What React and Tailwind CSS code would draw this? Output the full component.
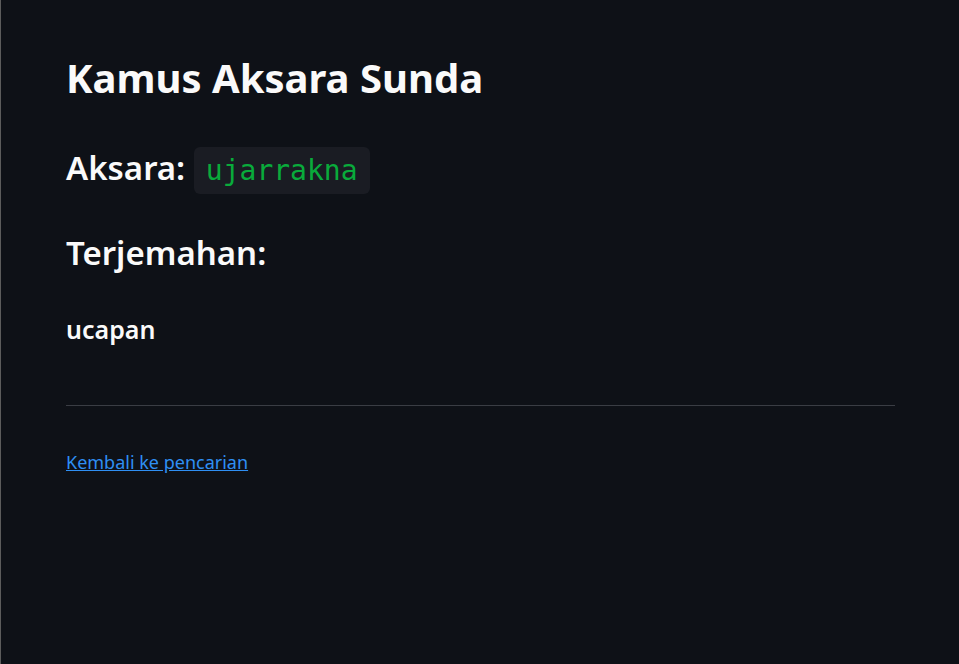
import React from 'react'

const sans = { fontFamily: '"Noto Sans", "Open Sans", sans-serif' }

const App = () => {
  return (
    <div
      className="min-h-screen bg-[#0e1117] border-l border-[#5c5c5c] text-[#fafafa] pl-[65px] pr-[64px] pt-[52px]"
      style={sans}
    >
      <h1 className="text-[40px] leading-[52px] font-bold">Kamus Aksara Sunda</h1>

      <h2 className="mt-[40px] text-[33px] leading-[48px] font-semibold">
        Aksara:{' '}
        <code className="inline-block align-baseline bg-[#1a1c23] text-[#09ab3b] rounded-md px-[12px] py-[6px] text-[28px] leading-[35px] font-normal font-['DejaVu_Sans_Mono',monospace]">
          ujarrakna
        </code>
      </h2>

      <h2 className="mt-[35px] text-[33px] leading-[48px] font-semibold">Terjemahan:</h2>

      <h4 className="mt-[36px] text-[25px] leading-[32px] font-semibold">ucapan</h4>

      <hr className="mt-[60px] border-0 border-t border-[#3a3d44]" />

      <div className="mt-[44px] text-[18px] leading-[24px]">
        <a href="#" className="text-[#2f8ff3] underline">
          Kembali ke pencarian
        </a>
      </div>
    </div>
  )
}

export default App
